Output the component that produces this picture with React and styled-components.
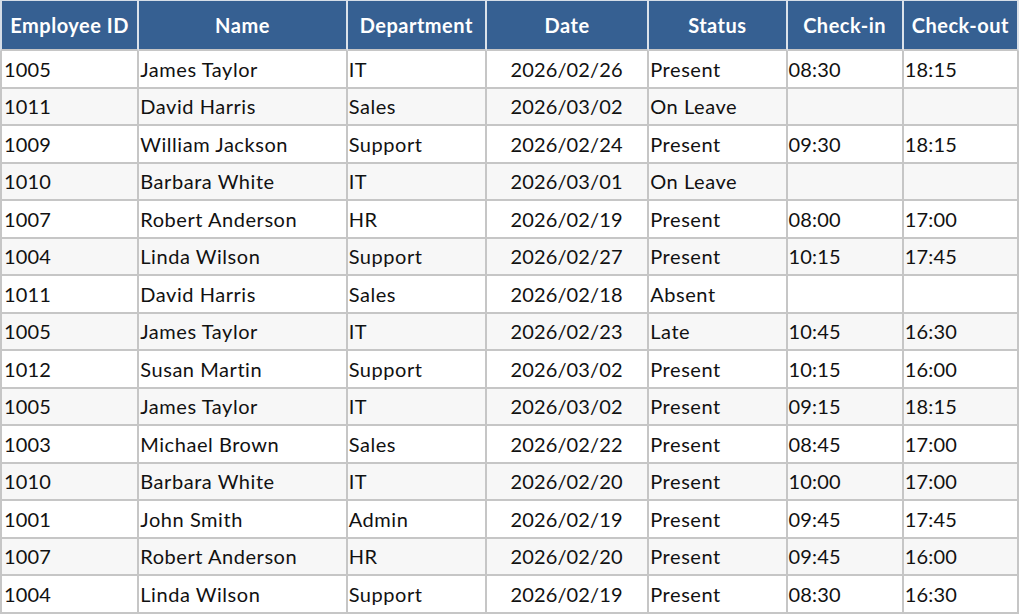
import React from "react";
import styled, { createGlobalStyle } from "styled-components";

const GlobalStyle = createGlobalStyle`
    html, body {
        margin: 0;
        padding: 0;
        background: #ffffff;
    }
    body {
        font-family: Lato, "Liberation Sans", sans-serif;
    }
`;

const Table = styled.table`
    border-collapse: separate;
    border-spacing: 0;
    table-layout: fixed;
    width: 1019px;
    font-family: Lato, "Liberation Sans", sans-serif;
`;

const HeadCell = styled.th`
    box-sizing: border-box;
    height: 51px;
    padding: 0 1px;
    background: #366092;
    color: #ffffff;
    font-size: 20px;
    font-weight: 700;
    letter-spacing: 0.5px;
    text-align: center;
    vertical-align: middle;
    white-space: nowrap;
    border-top: 1px solid #d6dee8;
    border-right: 2px solid #dbe2ea;
    border-bottom: 2px solid #c6c6c6;
    &:first-child {
        border-left: 2px solid #d6dee8;
    }
`;

const Row = styled.tr`
    height: 37.5px;
    background: ${(p) => (p.$striped ? "#f7f7f7" : "#ffffff")};
`;

const Cell = styled.td`
    box-sizing: border-box;
    padding: 0 2px 0 ${(p) => (p.$first ? "2px" : "1px")};
    font-size: 20px;
    letter-spacing: ${(p) => (p.$numeric ? "0.15px" : "0.55px")};
    color: #111111;
    text-align: ${(p) => (p.$center ? "center" : "left")};
    vertical-align: middle;
    white-space: nowrap;
    overflow: hidden;
    border-right: 2px solid #c6c6c6;
    border-bottom: 2px solid #c6c6c6;
    &:first-child {
        border-left: 2px solid #c6c6c6;
    }
`;

const columns = [
    { key: "id", title: "Employee ID", width: 139, numeric: true },
    { key: "name", title: "Name", width: 208 },
    { key: "dept", title: "Department", width: 139 },
    { key: "date", title: "Date", width: 162, center: true, numeric: true },
    { key: "status", title: "Status", width: 138 },
    { key: "in", title: "Check-in", width: 116, numeric: true },
    { key: "out", title: "Check-out", width: 115, numeric: true },
];

const records = [
    ["1005", "James Taylor", "IT", "2026/02/26", "Present", "08:30", "18:15"],
    ["1011", "David Harris", "Sales", "2026/03/02", "On Leave", "", ""],
    ["1009", "William Jackson", "Support", "2026/02/24", "Present", "09:30", "18:15"],
    ["1010", "Barbara White", "IT", "2026/03/01", "On Leave", "", ""],
    ["1007", "Robert Anderson", "HR", "2026/02/19", "Present", "08:00", "17:00"],
    ["1004", "Linda Wilson", "Support", "2026/02/27", "Present", "10:15", "17:45"],
    ["1011", "David Harris", "Sales", "2026/02/18", "Absent", "", ""],
    ["1005", "James Taylor", "IT", "2026/02/23", "Late", "10:45", "16:30"],
    ["1012", "Susan Martin", "Support", "2026/03/02", "Present", "10:15", "16:00"],
    ["1005", "James Taylor", "IT", "2026/03/02", "Present", "09:15", "18:15"],
    ["1003", "Michael Brown", "Sales", "2026/02/22", "Present", "08:45", "17:00"],
    ["1010", "Barbara White", "IT", "2026/02/20", "Present", "10:00", "17:00"],
    ["1001", "John Smith", "Admin", "2026/02/19", "Present", "09:45", "17:45"],
    ["1007", "Robert Anderson", "HR", "2026/02/20", "Present", "09:45", "16:00"],
    ["1004", "Linda Wilson", "Support", "2026/02/19", "Present", "08:30", "16:30"],
];

const App = () => {
    return (
        <>
            <GlobalStyle />
            <Table>
                <colgroup>
                    {columns.map((col) => (
                        <col key={col.key} style={{ width: col.width }} />
                    ))}
                </colgroup>
                <thead>
                    <tr>
                        {columns.map((col) => (
                            <HeadCell key={col.key}>{col.title}</HeadCell>
                        ))}
                    </tr>
                </thead>
                <tbody>
                    {records.map((rec, i) => (
                        <Row key={i} $striped={i % 2 === 1}>
                            {rec.map((value, j) => (
                                <Cell
                                    key={j}
                                    $first={j === 0}
                                    $center={columns[j].center}
                                    $numeric={columns[j].numeric}
                                >
                                    {value}
                                </Cell>
                            ))}
                        </Row>
                    ))}
                </tbody>
            </Table>
        </>
    );
};

export default App;
